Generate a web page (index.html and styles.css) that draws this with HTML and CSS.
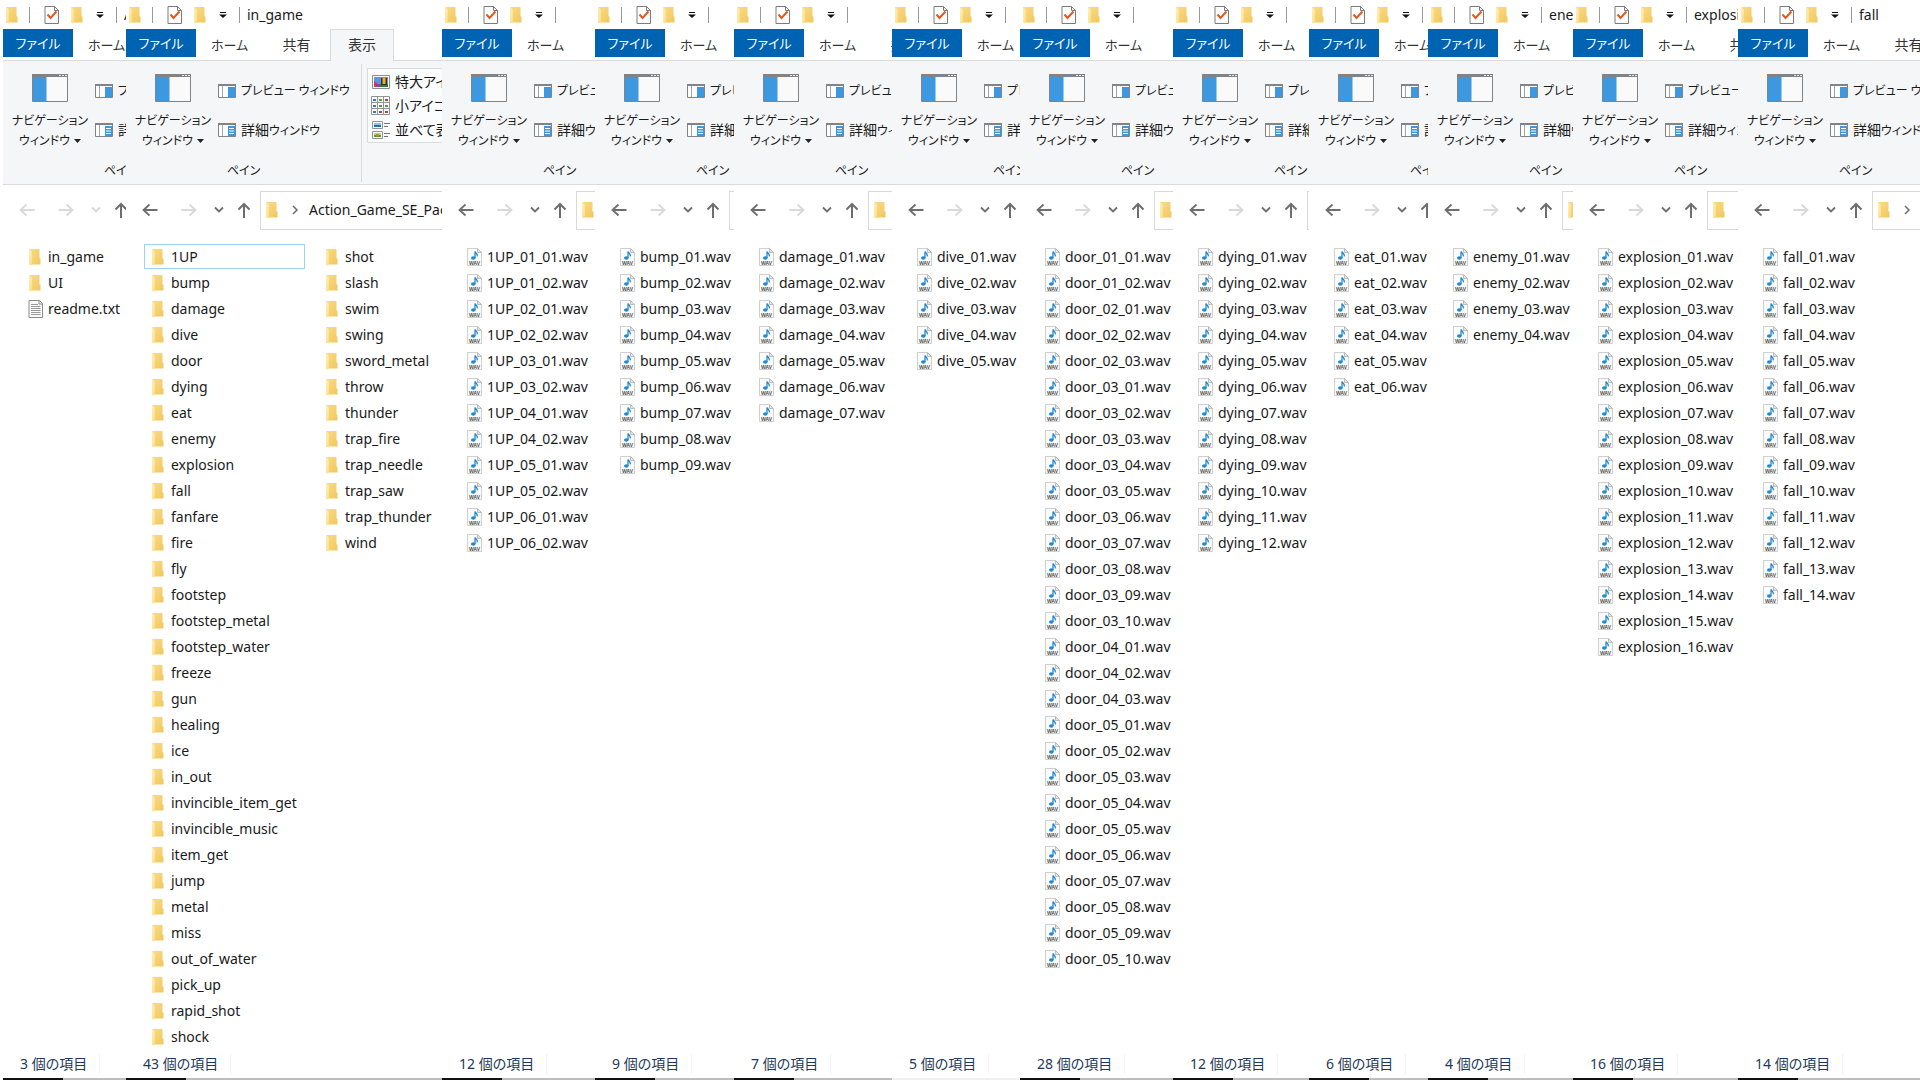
FILE: index.html
```
<!DOCTYPE html>
<html lang="ja">
<head>
<meta charset="utf-8">
<meta name="viewport" content="width=device-width, initial-scale=1">
<title>Action_Game_SE_Pack</title>
<link rel="stylesheet" href="styles.css">
</head>
<body>
<svg class="sprite" aria-hidden="true">
  <defs>
    <linearGradient id="fold-front" x1="0" y1="0" x2="1" y2="1">
      <stop offset="0" stop-color="#fff0bb"/><stop offset="1" stop-color="#fbdc83"/>
    </linearGradient>
    <linearGradient id="fold-back" x1="0" y1="0" x2="1" y2="1">
      <stop offset="0" stop-color="#f9dc8a"/><stop offset="1" stop-color="#f0c75c"/>
    </linearGradient>
  </defs>
  <symbol id="i-folder" viewBox="0 0 16 18">
    <path d="M1 1h10.500v9.500h1V16.500H1z" fill="url(#fold-back)"/>
    <path d="M1 1l3 2.500V14.500L3 17.500 1 16.500z" fill="url(#fold-front)"/>
  </symbol>
  <symbol id="i-txt" viewBox="0 0 16 18">
    <path d="M1 .5h10.500l3 3v14H1z" fill="#fafafa" stroke="#8a8a8a"/>
    <path d="M11 .5v3.500h3.500" fill="none" stroke="#8a8a8a"/>
    <path d="M3 4.500h7M3 6.500h9.500M3 8.500h9.500M3 10.500h9.500M3 12.500h9.500M3 14.500h9.500" stroke="#9a9a9a"/>
  </symbol>
  <symbol id="i-wav" viewBox="0 0 16 18">
    <path d="M.5 .5h10l4 4v13H.5z" fill="#fcfcfc" stroke="#cfcfcf"/>
    <path d="M10.500 .5v4h4z" fill="#e4e4e4" stroke="#bdbdbd"/>
    <ellipse cx="6.300" cy="10" rx="2.300" ry="1.800" fill="#1f8ad2"/>
    <path d="M8 10V3.500c.4 1.700 2.700 2 2.300 4.800" fill="none" stroke="#1f8ad2" stroke-width="1.300"/>
    <text x="7.500" y="16.500" text-anchor="middle" class="wav-tag">WAV</text>
  </symbol>
  <symbol id="i-check" viewBox="0 0 16 18">
    <path d="M1 .5h9.500l4 4v13H1z" fill="#fff" stroke="#7b7b7b"/>
    <path d="M10.500 .5v4h4" fill="none" stroke="#7b7b7b"/>
    <path d="M3.500 8.500l3 3.500 6-6.500" fill="none" stroke="#e0591f" stroke-width="2"/>
  </symbol>
  <symbol id="i-more" viewBox="0 0 8 6">
    <path d="M1 .5h6" stroke="#111"/><path d="M0 2.500h8L4 6z" fill="#111"/>
  </symbol>
  <symbol id="i-navpane" viewBox="0 0 36 28">
    <path d="M.5 .5h35v27H.5z" fill="#fafafa" stroke="#808488"/>
    <path d="M0 0h36v3H0z" fill="#808488"/>
    <path d="M27 1.500h2m1 0h2m1 0h2" stroke="#e8e8e8"/>
    <path d="M1 3h13.500v24H1z" fill="#3d98df"/>
  </symbol>
  <symbol id="i-preview" viewBox="0 0 18 14">
    <path d="M.5 .5h17v13H.5z" fill="#fdfdfd" stroke="#808488"/>
    <path d="M0 0h18v2H0z" fill="#808488"/><path d="M4.500 2v11" stroke="#a0a4a8"/>
    <path d="M10 3h7v10h-7z" fill="#3d98df"/>
  </symbol>
  <symbol id="i-details" viewBox="0 0 18 14">
    <path d="M.5 .5h17v13H.5z" fill="#fdfdfd" stroke="#808488"/>
    <path d="M0 0h18v2H0z" fill="#808488"/><path d="M4.500 2v11" stroke="#a0a4a8"/>
    <path d="M10 3h7v10h-7z" fill="#3d98df"/>
    <path d="M11 5.500h5M11 8h5M11 10.500h5" stroke="#fff"/>
  </symbol>
  <symbol id="i-drop" viewBox="0 0 7 4"><path d="M0 0h7L3.500 4z" fill="#222"/></symbol>
  <symbol id="i-xl" viewBox="0 0 20 20">
    <path d="M1.500 3.500h17v13h-17z" fill="#fff" stroke="#8a8e92"/>
    <path d="M3 5h14v10H3z" fill="#5a97e8"/><path d="M3 12h14v3H3z" fill="#2f7d3a"/>
    <path d="M3 9l3 2 1 4H3z" fill="#d23a4a"/><path d="M5 12h4v3H5z" fill="#8b3fb0"/>
    <path d="M10 6h6v7h-6z" fill="#333"/><path d="M11.500 6h3v6h-3z" fill="#f4b400"/>
  </symbol>
  <symbol id="i-small" viewBox="0 0 20 20">
    <path d="M.5 .5h18v18H.5zM6.500 .5v18M12.500 .5v18M.5 6.500h18M.5 12.500h18" fill="#fff" stroke="#8f9498"/>
    <path d="M2 3h3v2H2zM2 9h3v2H2zM2 15h3v2H2z" fill="#3c78b5"/>
    <path d="M8 3h3v2H8zM14 9h3v2h-3zM8 9h3v2H8z" fill="#5c9a4a"/>
    <path d="M14 3h3v2h-3zM8 15h3v2H8zM14 15h3v2h-3z" fill="#b8442c"/>
  </symbol>
  <symbol id="i-tiles" viewBox="0 0 20 20">
    <path d="M1.500 1.500h10v7h-10zM1.500 11.500h10v7h-10z" fill="#fff" stroke="#8f9498"/>
    <path d="M3 3h7v2H3z" fill="#8cc3f2"/><path d="M3 5h7v2H3z" fill="#2d6c9c"/>
    <path d="M3 13h7v2H3z" fill="#b8d67c"/><path d="M3 15h7v2H3z" fill="#5c9a3a"/><path d="M5 14h3v2H5z" fill="#e07b30"/>
    <path d="M13 3.500h6M13 6.500h4M13 13.500h6M13 16.500h4" stroke="#70757a"/>
  </symbol>
  <symbol id="i-back" viewBox="0 0 16 16"><path d="M15.500 8H1.500M7.500 2.500L1.500 8l6 5.500" fill="none" stroke="currentColor" stroke-width="1.800"/></symbol>
  <symbol id="i-forward" viewBox="0 0 16 16"><path d="M.5 8h14M8.500 2.500l6 5.500-6 5.500" fill="none" stroke="currentColor" stroke-width="1.800"/></symbol>
  <symbol id="i-recent" viewBox="0 0 10 16"><path d="M1 5.500l4 4 4-4" fill="none" stroke="currentColor" stroke-width="1.800"/></symbol>
  <symbol id="i-up" viewBox="0 0 14 16"><path d="M7 16V2M1.500 7.500L7 2l5.500 5.500" fill="none" stroke="currentColor" stroke-width="2"/></symbol>
  <symbol id="i-sep" viewBox="0 0 6 10"><path d="M1 1l4 4-4 4" fill="none" stroke="#6a6a6a" stroke-width="1.500"/></symbol>
</svg>
<main class="desktop" id="desktop"></main>
<script src="app.js"></script>
</body>
</html>
```
FILE: styles.css
```
* { box-sizing: border-box; }
body {
  margin: 0;
  background: #fff;
  color: #1a1a1a;
  font: 14px/20px "Noto Sans", "Noto Sans CJK JP", sans-serif;
  font-feature-settings: "palt";
}
button {
  margin: 0;
  padding: 0;
  border: 0;
  background: none;
  color: inherit;
  font: inherit;
  font-feature-settings: inherit;
}
svg { display: block; flex: none; }
.sprite { position: absolute; width: 0; height: 0; }
.wav-tag { font: 700 5px/6px "Noto Sans", sans-serif; fill: #555; }

.desktop {
  display: grid;
  grid-template-columns:
    minmax(0, 126fr) minmax(0, 316fr) minmax(0, 153fr) minmax(0, 139fr)
    minmax(0, 158fr) minmax(0, 128fr) minmax(0, 153fr) minmax(0, 136fr)
    minmax(0, 119fr) minmax(0, 145fr) minmax(0, 165fr) minmax(0, 182fr);
  min-height: 100vh;
}
.window {
  display: flex;
  flex-direction: column;
  overflow: hidden;
  white-space: nowrap;
}
.window:first-child { padding-left: 3px; }

.titlebar { display: flex; align-items: center; height: 29px; padding-left: 2px; }
.icon { width: 16px; height: 18px; }
.rule { flex: none; width: 1px; height: 16px; background: #9a9a9a; }
.quick { display: flex; align-items: center; gap: 10px; padding: 0 12px 0 14px; }
.titlebar .rule { margin-left: 8px; }
.titlebar .quick + .rule { margin-left: 0; }
.more { width: 8px; height: 6px; }
.title { margin: 0; padding-left: 7px; font-size: 14px; font-weight: 400; line-height: 20px; }

.tabs { display: flex; height: 31px; }
.tab { flex: none; width: 67px; height: 31px; color: #333; }
.tab.file, .tab.home { font-size: 13px; }
.tab.file { width: 70px; height: 28px; background: #0063b1; color: #fff; }
.tab.on { width: 64px; height: 32px; padding-bottom: 2px; background: #f5f6f7; border: 1px solid #dadbdc; border-bottom: 0; position: relative; }

.ribbon {
  display: flex;
  height: 125px;
  padding-top: 3px;
  background: #f5f6f7;
  border: solid #dadbdc;
  border-width: 1px 0;
}
.group { display: flex; flex: none; flex-direction: column; width: 236px; height: 118px; border-right: 1px solid #dadbdc; }
.tools { display: flex; height: 97px; }
.nav-toggle { display: flex; flex: none; flex-direction: column; align-items: center; width: 92px; padding: 10px 0 0 2px; font-size: 12px; }
.nav-toggle .big { width: 36px; height: 28px; margin-bottom: 9px; }
.nav-toggle .second { display: flex; align-items: center; gap: 4px; }
.drop { width: 7px; height: 4px; }
.panes { display: flex; flex: none; flex-direction: column; gap: 19px; padding-top: 17px; }
.pane { display: flex; align-items: center; gap: 5px; height: 20px; font-size: 12px; }
.pane svg { width: 18px; height: 14px; }
.kanji { font-size: 14px; }
.group-name { text-align: center; font-size: 12px; line-height: 20px; }
.layouts { flex: none; width: 220px; height: 75px; margin: 4px 0 0 5px; padding: 1px 3px; background: #fbfcfd; border: 1px solid #dadbdc; }
.layout { display: flex; align-items: center; gap: 4px; height: 24px; }
.layout svg { width: 20px; height: 20px; }

.address { display: flex; align-items: center; height: 50px; margin-bottom: 9px; padding: 0 0 0 16px; color: #6e6e6e; }
.address button { flex: none; }
.address button:disabled { color: #d9d9d9; }
.arrow { width: 16px; height: 16px; margin-right: 23px; }
.forward .arrow { margin-right: 17px; }
.recent svg { width: 10px; height: 16px; margin-right: 13px; }
.up svg { width: 14px; height: 16px; margin-right: 9px; }
.path { display: flex; flex: none; align-items: center; width: 480px; height: 39px; padding-left: 4px; border: 1px solid #d9d9d9; color: #1a1a1a; }
.crumb-sep { width: 6px; height: 10px; margin: 0 11px; }

.files {
  display: grid;
  flex: 1;
  grid-auto-flow: column;
  grid-template-rows: repeat(31, 26px);
  grid-auto-columns: 174px;
  margin: 0;
  padding: 0 0 0 18px;
  list-style: none;
}
.file-item { display: flex; align-items: center; gap: 4px; width: 161px; height: 25px; padding: 1px 0 0 6px; border: 1px solid transparent; }
.file-item.selected { border-color: #99d1ff; }

.status { display: flex; align-items: center; height: 28px; padding-left: 17px; color: #1e395b; }
.status span { padding-right: 12px; border-right: 1px solid #f3f3f3; }
.edge { display: flex; height: 2px; background: #bdbdbd; }
.edge::before { content: ""; width: 60px; background: #111; }
.edge.light { background: #f0f0f0; }
.edge.light::before { background: none; }
```
FILE: app.js
```
const pad = n => String(n).padStart(2, "0");
const series = (name, count) => Array.from({ length: count }, (_, i) => `${name}_${pad(i + 1)}.wav`);
const nested = (name, counts) => counts.flatMap((count, i) => series(`${name}_${pad(i + 1)}`, count));

const folders = ("1UP bump damage dive door dying eat enemy explosion fall fanfare fire fly footstep " +
  "footstep_metal footstep_water freeze gun healing ice in_out invincible_item_get invincible_music " +
  "item_get jump metal miss out_of_water pick_up rapid_shot shock shot slash swim swing sword_metal " +
  "throw thunder trap_fire trap_needle trap_saw trap_thunder wind").split(" ");

const windows = [
  { title: "Action_Game_SE_Pack", files: ["in_game", "UI", "readme.txt"], root: true },
  { title: "in_game", files: folders, selected: "1UP", viewTab: true },
  { files: nested("1UP", [2, 2, 2, 2, 2, 2]) },
  { files: series("bump", 9) },
  { files: series("damage", 7) },
  { files: series("dive", 5), light: true },
  { files: nested("door", [2, 3, 10, 3, 10]) },
  { files: series("dying", 12) },
  { files: series("eat", 6) },
  { title: "enemy", files: series("enemy", 4) },
  { title: "explosion", files: series("explosion", 16) },
  { title: "fall", files: series("fall", 14) }
];

const icon = (name, cls = "icon") => `<svg class="${cls}" aria-hidden="true"><use href="#i-${name}"/></svg>`;
const kind = name => name.endsWith(".wav") ? "wav" : name.endsWith(".txt") ? "txt" : "folder";

const render = w => `
<section class="window">
  <header class="titlebar">
    ${icon("folder")}<span class="rule"></span>
    <div class="quick">
      <button aria-label="プロパティ">${icon("check")}</button>
      <button aria-label="新しいフォルダー">${icon("folder")}</button>
      <button aria-label="クイック アクセス">${icon("more", "more")}</button>
    </div>
    <span class="rule"></span>
    ${w.title ? `<h2 class="title">${w.title}</h2>` : ""}
  </header>
  <nav class="tabs">
    <button class="tab file">ファイル</button>
    <button class="tab home">ホーム</button>
    <button class="tab">共有</button>
    ${w.viewTab ? '<button class="tab on">表示</button>' : ""}
  </nav>
  <div class="ribbon">
    <div class="group">
      <div class="tools">
        <button class="nav-toggle">${icon("navpane", "big")}<span>ナビゲーション</span>
          <span class="second">ウィンドウ ${icon("drop", "drop")}</span></button>
        <div class="panes">
          <button class="pane">${icon("preview", "")}プレビュー ウィンドウ</button>
          <button class="pane">${icon("details", "")}<span><span class="kanji">詳細</span>ウィンドウ</span></button>
        </div>
      </div>
      <div class="group-name">ペイン</div>
    </div>
    ${w.viewTab ? `<div class="layouts">
      <button class="layout">${icon("xl", "")}特大アイコン</button>
      <button class="layout">${icon("small", "")}小アイコン</button>
      <button class="layout">${icon("tiles", "")}並べて表示</button>
    </div>` : ""}
  </div>
  <div class="address">
    <button aria-label="戻る" ${w.root ? "disabled" : ""}>${icon("back", "arrow")}</button>
    <button class="forward" aria-label="進む" disabled>${icon("forward", "arrow")}</button>
    <button class="recent" aria-label="最近表示した場所" ${w.root ? "disabled" : ""}>${icon("recent", "")}</button>
    <button class="up" aria-label="上へ">${icon("up", "")}</button>
    <div class="path">${icon("folder")}${icon("sep", "crumb-sep")}${w.viewTab ? "<span>Action_Game_SE_Pack</span>" : ""}</div>
  </div>
  <ul class="files">
    ${w.files.map(f => `<li class="file-item${f === w.selected ? " selected" : ""}">${icon(kind(f))}${f}</li>`).join("")}
  </ul>
  <footer class="status"><span>${w.files.length} 個の項目</span></footer>
  <div class="edge${w.light ? " light" : ""}"></div>
</section>`;

document.getElementById("desktop").innerHTML = windows.map(render).join("");
```
